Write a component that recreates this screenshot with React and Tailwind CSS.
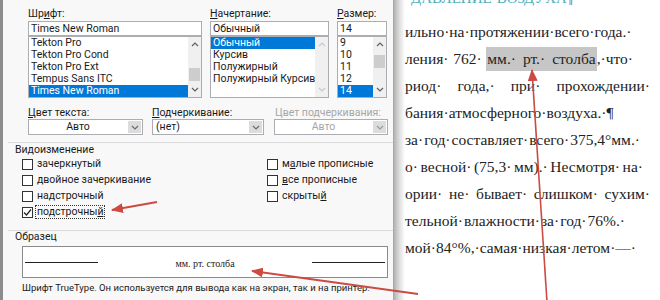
import React from "react";

const UI = { fontFamily: 'Roboto, "Noto Sans", sans-serif' };
const SERIF = { fontFamily: '"Liberation Serif", "DejaVu Serif", serif' };

function Chev({ dir = "down", color = "#606060" }) {
  const d = dir === "up" ? "M1 5 L4 2 L7 5" : "M1 2 L4 5 L7 2";
  return (
    <svg width="8" height="7" viewBox="0 0 8 7">
      <path d={d} fill="none" stroke={color} strokeWidth="1.2" />
    </svg>
  );
}

function U({ children }) {
  return <span className="underline underline-offset-[1px]">{children}</span>;
}

function ListBox({ items, sel, thumbTop, disabled }) {
  const arrow = disabled ? "#c8c8c8" : "#606060";
  return (
    <div className="h-[62px] border border-[#abadb3] bg-white flex">
      <div className="flex-1 overflow-hidden">
        {items.map((t, i) => (
          <div
            key={i}
            className={
              "h-[12px] leading-[12px] pl-[2px] whitespace-nowrap " +
              (i === sel ? "bg-[#0078d7] text-white" : "text-[#1a1a1a]")
            }
          >
            {t}
          </div>
        ))}
      </div>
      <div className="w-[13px] bg-[#f0f0f0] flex flex-col">
        <div className="h-[15px] flex items-center justify-center">
          <Chev dir="up" color={arrow} />
        </div>
        <div className="flex-1">
          {thumbTop !== undefined && (
            <div
              className="mx-[1px] h-[13px] bg-[#cdcdcd]"
              style={{ marginTop: thumbTop }}
            />
          )}
        </div>
        <div className="h-[15px] flex items-center justify-center">
          <Chev dir="down" color={arrow} />
        </div>
      </div>
    </div>
  );
}

function Select({ value, center, disabled, w }) {
  return (
    <div className={"h-[16px] border border-[#abadb3] bg-white flex " + w}>
      <div
        className={
          "flex-1 leading-[14px] " +
          (center ? "text-center " : "pl-[3px] ") +
          (disabled ? "text-[#a6a6a6]" : "text-[#1a1a1a]")
        }
      >
        {value}
      </div>
      <div className="w-[13px] m-[1px] bg-[#dcdcdc] flex items-center justify-center">
        <Chev dir="down" color={disabled ? "#9a9a9a" : "#6a6a6a"} />
      </div>
    </div>
  );
}

function Check({ children, checked, focus }) {
  return (
    <div className="h-[16px] flex items-center">
      <div className="w-[11px] h-[11px] border border-[#333] bg-white flex items-center justify-center">
        {checked && (
          <svg width="9" height="9" viewBox="0 0 9 9">
            <path d="M1 4.5 L3.5 7 L8 1.5" fill="none" stroke="#222" strokeWidth="1.2" />
          </svg>
        )}
      </div>
      <div
        className={
          "ml-[2px] leading-[12px] text-[#1a1a1a] px-[1px] " +
          (focus ? "border border-dotted border-[#333]" : "border border-transparent")
        }
      >
        {children}
      </div>
    </div>
  );
}

function Line({ items, w }) {
  return (
    <div
      className="h-[27px] leading-[27px] flex justify-between whitespace-nowrap text-[#222]"
      style={{ width: w }}
    >
      {items.map((t, i) => (
        <span key={i}>{t}</span>
      ))}
    </div>
  );
}

export default function App() {
  return (
    <div className="relative w-[660px] h-[300px] flex overflow-hidden bg-white">
      {/* Dialog */}
      <div
        className="w-[394px] h-full shrink-0 bg-[#f8f8f8] border-l-[3px] border-l-[#8c8c8c] border-r border-r-[#a8a8a8] text-[10.5px]"
        style={UI}
      >
        {/* Top row */}
        <div className="pt-[6px] pl-[25px] flex gap-[8px]">
          <div className="w-[174px]">
            <div className="h-[15px] leading-[15px] text-[#1a1a1a]">
              Шр<U>и</U>фт:
            </div>
            <div className="h-[15px] border border-[#abadb3] bg-white pl-[2px] leading-[13px] text-[#1a1a1a]">
              Times New Roman
            </div>
            <ListBox
              items={["Tekton Pro", "Tekton Pro Cond", "Tekton Pro Ext", "Tempus Sans ITC", "Times New Roman"]}
              sel={4}
              thumbTop={16}
            />
          </div>
          <div className="w-[119px]">
            <div className="h-[15px] leading-[15px] text-[#1a1a1a]">
              <U>Н</U>ачертание:
            </div>
            <div className="h-[15px] border border-[#abadb3] bg-white pl-[2px] leading-[13px] text-[#1a1a1a]">
              Обычный
            </div>
            <ListBox
              items={["Обычный", "Курсив", "Полужирный", "Полужирный Курсив"]}
              sel={0}
              disabled
            />
          </div>
          <div className="w-[50px]">
            <div className="h-[15px] leading-[15px] text-[#1a1a1a]">
              <U>Р</U>азмер:
            </div>
            <div className="h-[15px] border border-[#abadb3] bg-white pl-[2px] leading-[13px] text-[#1a1a1a]">
              14
            </div>
            <ListBox items={["9", "10", "11", "12", "14"]} sel={4} thumbTop={3} />
          </div>
        </div>

        {/* Row 2 */}
        <div className="mt-[8px] pl-[25px] flex">
          <div className="w-[115px]">
            <div className="h-[13px] leading-[13px] text-[#1a1a1a]">
              <U>Ц</U>вет текста:
            </div>
            <Select value="Авто" center w="w-[115px]" />
          </div>
          <div className="w-[112px] ml-[9px]">
            <div className="h-[13px] leading-[13px] text-[#1a1a1a]">
              <U>П</U>одчеркивание:
            </div>
            <Select value="(нет)" w="w-[112px]" />
          </div>
          <div className="w-[114px] ml-[10px]">
            <div className="h-[13px] leading-[13px] text-[#a6a6a6] pl-[1px]">
              Цвет подчеркивания:
            </div>
            <Select value="Авто" center disabled w="w-[114px]" />
          </div>
        </div>

        {/* Effects */}
        <div className="mt-[7px] ml-[5px] h-px bg-[#dcdcdc]" />
        <div className="pl-[12px] h-[13px] leading-[13px] text-[#1a1a1a]">Видоизменение</div>
        <div className="pl-[19px] flex">
          <div className="w-[245px]">
            <Check>зачеркнутый</Check>
            <Check>двойное зачеркивание</Check>
            <Check>
              на<U>д</U>строчный
            </Check>
            <Check checked focus>
              подстрочны<U>й</U>
            </Check>
          </div>
          <div>
            <Check>
              м<U>а</U>лые прописные
            </Check>
            <Check>
              <U>в</U>се прописные
            </Check>
            <Check>
              скрыты<U>й</U>
            </Check>
          </div>
        </div>

        {/* Preview */}
        <div className="mt-[10px] ml-[5px] h-px bg-[#dcdcdc]" />
        <div className="pl-[12px] h-[12px] leading-[12px] text-[#1a1a1a]">Образец</div>
        <div className="mt-[3px] ml-[19px] w-[366px] h-[32px] border border-[#8a8a8a] bg-white flex items-center justify-between px-[2px]">
          <div className="w-[73px] h-px bg-[#222]" />
          <div className="text-[10px] text-[#222] mt-[3px]" style={SERIF}>
            мм. рт. столба
          </div>
          <div className="w-[73px] h-px bg-[#222]" />
        </div>
        <div className="mt-[4px] pl-[19px] text-[9.5px] leading-[12px] text-[#1a1a1a] whitespace-nowrap">
          Шрифт TrueType. Он используется для вывода как на экран, так и на принтер.
        </div>
      </div>

      {/* shadow */}
      <div className="w-[11px] h-full shrink-0 bg-gradient-to-r from-[#b4b4b4] via-[#dedede] to-white" />

      {/* Document */}
      <div className="flex-1 h-full text-[15.5px]" style={SERIF}>
        <div className="h-[6px] overflow-hidden">
          <div className="-mt-[10px] leading-[16px] text-[15px] text-[#4fb0bd] whitespace-nowrap pl-[6px]">
            ДАВЛЕНИЕ·ВОЗДУХА<span className="text-[#444] text-[13px]">¶</span>
          </div>
        </div>
        <div className="pt-[12px]">
          <Line w={217} items={["ильно·", "на·", "протяжении·", "всего·", "года.·"]} />
          <div className="h-[27px] leading-[27px] flex justify-between items-center whitespace-nowrap text-[#222] w-[228px]">
            <span>ления·</span>
            <span>762·</span>
            <span className="flex items-center">
              <span className="bg-[#c6c6c6] h-[24px] leading-[24px] flex gap-[7px] px-[1px]">
                <span>мм.·</span>
                <span>рт.·</span>
                <span>столба</span>
              </span>
              <span>,·что·</span>
            </span>
          </div>
          <Line w={245} items={["риод·", "года,·", "при·", "прохождении·"]} />
          <div className="h-[27px] leading-[27px] whitespace-nowrap text-[#222]">
            бания·атмосферного·воздуха.·¶
          </div>
          <Line w={235} items={["за·", "год·", "составляет·", "всего·", "375,4°мм.·"]} />
          <Line w={238} items={["о·", "весной·", "(75,3·", "мм).·", "Несмотря·", "на·"]} />
          <Line w={245} items={["ории·", "не·", "бывает·", "слишком·", "сухим·"]} />
          <Line w={220} items={["тельной·", "влажности·", "за·", "год·", "76%.·"]} />
          <Line w={215} items={["мой·", "84°%,·", "самая·", "низкая·", "летом·", "—·"]} />
        </div>
      </div>

      {/* annotation arrows */}
      <svg
        className="absolute inset-0 pointer-events-none"
        width="660"
        height="300"
        viewBox="0 0 660 300"
      >
        <defs>
          <marker id="ah" markerWidth="12" markerHeight="10" refX="11" refY="5" orient="auto" markerUnits="userSpaceOnUse">
            <path d="M0 0 L12 5 L0 10 Z" fill="#cc4a42" />
          </marker>
        </defs>
        <line x1="157" y1="202" x2="112" y2="210" stroke="#cc4a42" strokeWidth="1.8" markerEnd="url(#ah)" />
        <line x1="418" y1="294" x2="252" y2="271" stroke="#cc4a42" strokeWidth="1.8" markerEnd="url(#ah)" />
        <line x1="547" y1="302" x2="532" y2="70" stroke="#cc4a42" strokeWidth="1.6" markerEnd="url(#ah)" />
      </svg>
    </div>
  );
}
